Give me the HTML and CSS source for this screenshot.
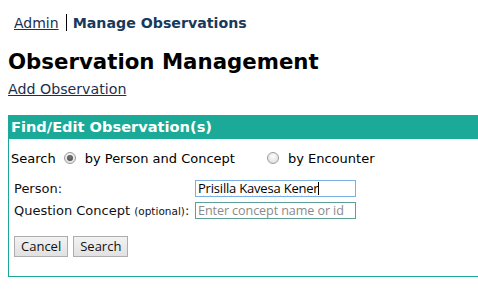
FILE: index.html
```html
<!DOCTYPE html>
<html>
<head>
<meta charset="utf-8">
<link rel="stylesheet" href="styles.css">
</head>
<body>
<div class="crumbs">
  <a class="crumb-link" href="#">Admin</a>
  <span class="crumb-sep"></span>
  <span class="crumb-current">Manage Observations</span>
</div>
<h1 class="title">Observation Management</h1>
<a class="add-link" href="#">Add Observation</a>
<div class="box">
  <div class="box-header">Find/Edit Observation(s)</div>
  <div class="search-row">
    <span>Search</span>
    <span class="radio checked"></span>
    <span>by Person and Concept</span>
    <span class="radio second"></span>
    <span>by Encounter</span>
  </div>
  <div class="form-grid">
    <label class="lbl">Person:</label>
    <div class="field focus"><span class="typed">Prisilla Kavesa Kener</span><span class="caret"></span></div>
    <label class="lbl">Question Concept <span class="opt">(optional)</span>:</label>
    <div class="field"><span class="ph">Enter concept name or id</span></div>
  </div>
  <div class="buttons">
    <button class="btn">Cancel</button>
    <button class="btn">Search</button>
  </div>
</div>
</body>
</html>
```
FILE: styles.css
```css
html, body { margin: 0; padding: 0; background: #fff; }
body {
  padding: 8px 0 0 8px;
  font-family: "DejaVu Sans", Verdana, sans-serif;
  font-size: 13px;
  color: #000;
  overflow: hidden;
}
.crumbs {
  display: flex;
  align-items: center;
  height: 29px;
  padding-left: 6px;
  font-size: 14px;
}
.crumb-link { color: #1c2f4d; text-decoration: underline; }
.crumb-sep { width: 1px; height: 17px; background: #000; margin: 0 6px 0 7px; }
.crumb-current { color: #173a5c; font-weight: bold; font-size: 14.2px; }
.title {
  margin: 12px 0 0 0;
  font-size: 21.3px;
  font-weight: bold;
  line-height: 26px;
}
.add-link {
  display: inline-block;
  margin-top: 6px;
  font-size: 14.2px;
  line-height: 17px;
  color: #1c2f4d;
}
.box {
  margin-top: 17px;
  border: 1px solid #1aa796;
  border-top: none;
  border-right: none;
  height: 162px;
  box-sizing: border-box;
}
.box-header {
  background: #1aaa97;
  color: #fff;
  font-weight: bold;
  font-size: 14.6px;
  height: 24px;
  line-height: 24px;
  padding-left: 3px;
  margin-left: -1px;
}
.search-row {
  display: flex;
  align-items: center;
  height: 18px;
  margin-top: 10px;
  padding-left: 2px;
}
.radio {
  width: 12px; height: 12px;
  border-radius: 50%;
  box-sizing: border-box;
  border: 1px solid #9c9c9c;
  background: radial-gradient(circle at 50% 35%, #fdfdfd, #d8d8d8);
  margin: 0 9px 0 8px;
  position: relative;
}
.radio.checked::after {
  content: "";
  position: absolute;
  left: 2px; top: 2px;
  width: 6px; height: 6px;
  border-radius: 50%;
  background: radial-gradient(circle at 50% 40%, #7a7a7a, #3e3e3e);
}
.radio.second { margin-left: 32px; }
.form-grid {
  display: grid;
  grid-template-columns: 181px 161px;
  row-gap: 5px;
  margin: 13px 0 0 5px;
  align-items: center;
}
.lbl { font-size: 13px; color: #111; }
.opt { font-size: 10.5px; }
.field {
  height: 17px;
  box-sizing: border-box;
  border: 1px solid #5b9f97;
  font-family: "Open Sans", "Liberation Sans", sans-serif;
  font-size: 13px;
  line-height: 15px;
  padding-left: 2px;
  display: flex;
  align-items: center;
  overflow: hidden;
  white-space: nowrap;
}
.field.focus { border-color: #7ab0e4; }
.typed {
  color: #000;
  text-decoration: underline wavy #e04040;
  text-decoration-thickness: 1px;
  text-underline-offset: 2px;
  letter-spacing: -0.2px;
}
.caret { width: 1px; height: 13px; background: #000; }
.ph { color: #8a8a8a; font-size: 12.6px; letter-spacing: -0.1px; }
.buttons {
  display: flex;
  gap: 5px;
  margin: 17px 0 0 5px;
}
.btn {
  height: 21px;
  padding: 0 6px;
  margin: 0;
  font-family: "Open Sans", "Liberation Sans", sans-serif;
  font-size: 13px;
  line-height: 17px;
  color: #111;
  border: 1px solid #adadad;
  border-radius: 0;
  background: linear-gradient(#f2f2f2, #e1e1e1);
}
```
